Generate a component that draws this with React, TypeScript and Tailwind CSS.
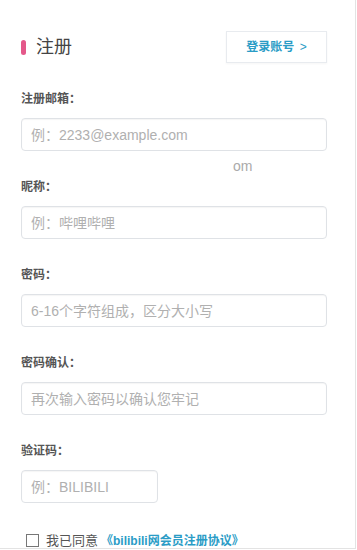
import React from 'react';

const font = { fontFamily: '"Liberation Sans", "Noto Sans CJK SC", sans-serif' };

interface FieldProps {
    label: string;
    placeholder: string;
    short?: boolean;
    type?: string;
}

const Field: React.FC<FieldProps> = ({ label, placeholder, short, type = 'text' }) => (
    <div className="mt-[26px]">
        <div className="h-5 leading-5 text-[12px] font-bold text-[#555]">{label}</div>
        <input
            type={type}
            placeholder={placeholder}
            className={`mt-[9px] block h-[33px] ${short ? 'w-[137px]' : 'w-[306px]'} rounded-[4px] border border-[#dfe2e6] bg-white px-[9px] text-[14px] text-[#333] outline-none shadow-[inset_0_1px_1px_rgba(0,0,0,0.04)] placeholder:text-[#b0b0b0]`}
        />
    </div>
);

export default function App() {
    return (
        <div style={font} className="relative h-[549px] w-[356px] overflow-hidden border-r border-b border-[#e3e3e3] bg-white">
            <div className="px-[21px] pt-[31px]">
                <div className="flex h-8 w-[306px] items-center justify-between">
                    <div className="flex items-center">
                        <span className="h-[15px] w-[5px] rounded-full bg-[#e4588a]" />
                        <span className="ml-[10px] text-[18px] text-[#444]">注册</span>
                    </div>
                    <button className="h-8 w-[101px] border border-[#e8ebef] bg-white text-[12px] font-bold text-[#2a9cc6] shadow-[0_1px_2px_rgba(0,0,0,0.04)]">
                        登录账号 <span className="ml-[2px] font-normal">&gt;</span>
                    </button>
                </div>

                <Field label="注册邮箱：" placeholder="例：2233@example.com" />
                <Field label="昵称：" placeholder="例：哔哩哔哩" />
                <Field label="密码：" placeholder="6-16个字符组成，区分大小写" type="password" />
                <Field label="密码确认：" placeholder="再次输入密码以确认您牢记" type="password" />
                <Field label="验证码：" placeholder="例：BILIBILI" short />

                <div className="mt-[28px] flex items-center pl-[5px] text-[12px]">
                    <span className="h-[13px] w-[13px] border border-[#777] bg-white" />
                    <span className="ml-[7px] text-[13px] text-[#555]">我已同意</span>
                    <a className="ml-[3px] font-bold text-[#2a9cc6]">《bilibili网会员注册协议》</a>
                </div>
            </div>

            <span className="absolute left-[233px] top-[156px] text-[14px] text-[#aaa]">om</span>
        </div>
    );
}
